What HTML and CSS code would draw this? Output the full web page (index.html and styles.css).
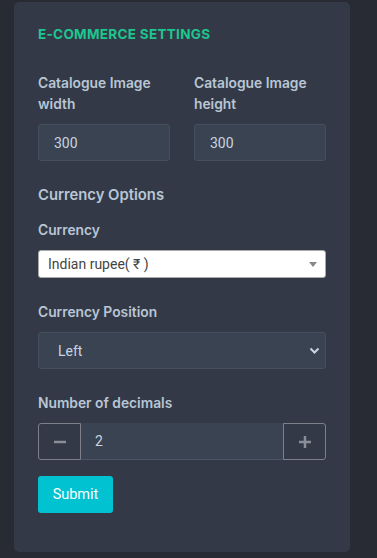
FILE: index.html
```html
<!DOCTYPE html>
<html lang="en">
<head>
    <meta charset="UTF-8">
    <title>ecommerce-settings</title>
    <link rel="stylesheet" href="styles.css">
</head>
<body>

<div id="settingsCard">
    <h2 id="cardTitle">E-Commerce Settings</h2>

    <div class="row">
        <div class="field">
            <label class="label">Catalogue Image width</label>
            <input class="darkInput" type="text" value="300">
        </div>
        <div class="field">
            <label class="label">Catalogue Image height</label>
            <input class="darkInput" type="text" value="300">
        </div>
    </div>

    <h3 class="sectionTitle">Currency Options</h3>

    <div class="field">
        <label class="label">Currency</label>
        <div class="whiteSelect">
            <span>Indian rupee( ₹ )</span>
            <span class="triangle"></span>
        </div>
    </div>

    <div class="field spaced">
        <label class="label">Currency Position</label>
        <div class="darkSelect">
            <span>Left</span>
            <svg width="11" height="8" viewBox="0 0 11 8">
                <path d="M1.5 1.5 L5.5 5.5 L9.5 1.5" fill="none" stroke="#c9d4e0" stroke-width="2"/>
            </svg>
        </div>
    </div>

    <div class="field spaced">
        <label class="label">Number of decimals</label>
        <div class="stepper">
            <button class="stepButton">
                <svg width="14" height="14" viewBox="0 0 14 14"><path d="M1 7 H13" stroke="#8a8f97" stroke-width="2.5"/></svg>
            </button>
            <input class="stepValue" type="text" value="2">
            <button class="stepButton">
                <svg width="14" height="14" viewBox="0 0 14 14"><path d="M1 7 H13 M7 1 V13" stroke="#8a8f97" stroke-width="2.5"/></svg>
            </button>
        </div>
    </div>

    <button id="submitButton">Submit</button>
</div>

</body>
</html>
```

FILE: styles.css
```css
body {
    margin: 0;
    background-color: #282b34;
    font-family: Inter, "Noto Sans", sans-serif;
}
#settingsCard {
    margin: 2px 27px 6px 14px;
    height: 550px;
    box-sizing: border-box;
    padding: 24px 24px 0 24px;
    background-color: #333947;
    border-radius: 5px;
}
#cardTitle {
    margin: 0 0 31px 0;
    font-size: 13.5px;
    font-weight: 700;
    color: #1ec68f;
    text-transform: uppercase;
    letter-spacing: 0.3px;
}
.row {
    display: flex;
    gap: 24px;
}
.row .field {
    flex: 1;
    min-width: 0;
}
.field {
    display: flex;
    flex-direction: column;
}
.spaced {
    margin-top: 24px;
}
.label {
    font-size: 13.8px;
    font-weight: 600;
    line-height: 21px;
    color: #b9c6d4;
    margin-bottom: 9px;
}
.darkInput {
    width: 100%;
    min-width: 0;
    height: 37px;
    box-sizing: border-box;
    background-color: #394352;
    border: 1px solid #454f5e;
    border-radius: 3px;
    padding: 0 15px;
    font-family: Roboto, Arial, sans-serif;
    font-size: 14px;
    color: #c9d4e0;
}
.sectionTitle {
    margin: 25px 0 16px 0;
    font-size: 14.8px;
    line-height: 18px;
    font-weight: 600;
    color: #b9c6d4;
}
.whiteSelect {
    height: 28px;
    box-sizing: border-box;
    display: flex;
    align-items: center;
    justify-content: space-between;
    padding: 0 8px 0 9px;
    background-color: #fff;
    border: 1px solid #aaa;
    border-radius: 3px;
    font-family: Roboto, Arial, sans-serif;
    font-size: 14px;
    color: #444;
}
.triangle {
    width: 0;
    height: 0;
    border-left: 4px solid transparent;
    border-right: 4px solid transparent;
    border-top: 5px solid #888;
}
.darkSelect {
    height: 37px;
    box-sizing: border-box;
    display: flex;
    align-items: center;
    justify-content: space-between;
    padding: 0 5px 0 19px;
    background-color: #394352;
    border: 1px solid #454f5e;
    border-radius: 3px;
    font-family: Roboto, Arial, sans-serif;
    font-size: 14px;
    color: #c9d4e0;
}
.stepper {
    display: flex;
    height: 37px;
}
.stepButton {
    width: 43px;
    flex-shrink: 0;
    display: flex;
    align-items: center;
    justify-content: center;
    background-color: transparent;
    border: 1px solid #7d8088;
    padding: 0;
}
.stepButton:first-child {
    border-radius: 3px 0 0 3px;
}
.stepButton:last-child {
    border-radius: 0 3px 3px 0;
}
.stepValue {
    flex: 1;
    min-width: 0;
    box-sizing: border-box;
    background-color: #394352;
    border: none;
    border-bottom: 1px solid #4d5666;
    padding: 0 14px;
    font-family: Roboto, Arial, sans-serif;
    font-size: 14px;
    color: #c9d4e0;
}
#submitButton {
    margin-top: 16px;
    width: 75px;
    height: 37px;
    background-color: #00c2d1;
    border: none;
    border-radius: 3px;
    color: #fff;
    font-family: Roboto, Arial, sans-serif;
    font-size: 14.5px;
}
```
